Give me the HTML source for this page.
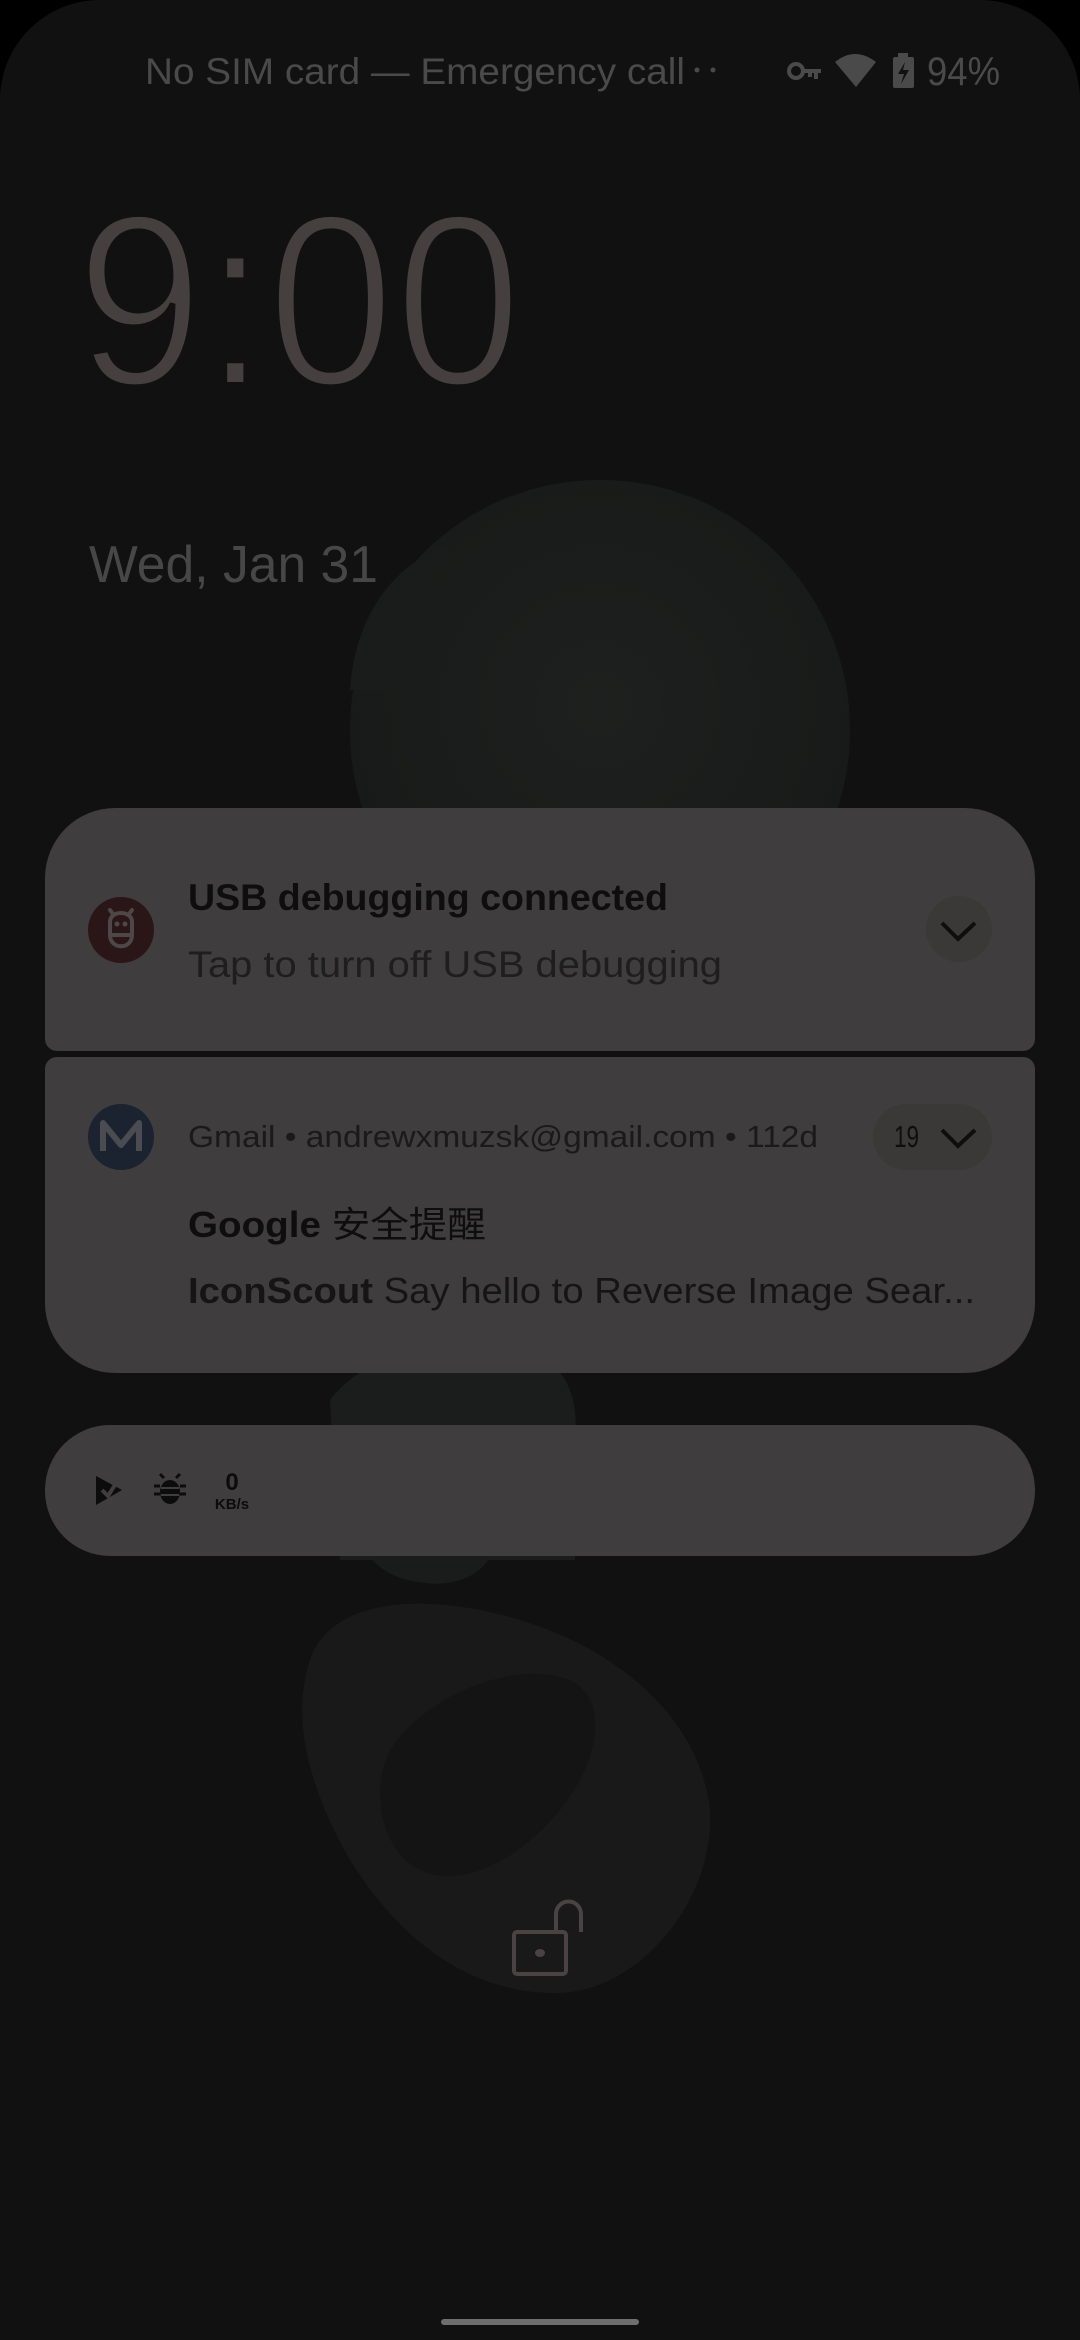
<!DOCTYPE html>
<html><head><meta charset="utf-8"><style>
html,body{margin:0;padding:0;background:#000;}
body{width:1080px;height:2340px;overflow:hidden;}
svg{display:block;}
text{font-family:"Liberation Sans","Noto Sans CJK SC",sans-serif;}
</style></head><body>
<svg width="1080" height="2340" viewBox="0 0 1080 2340" xmlns="http://www.w3.org/2000/svg">
<defs>
<radialGradient id="g1" cx="0.5" cy="0.45" r="0.55"><stop offset="0" stop-color="#1e201f"/><stop offset="1" stop-color="#181a19"/></radialGradient>
</defs>
<rect x="0" y="0" width="1080" height="2340" rx="100" fill="#111111"/>
<rect x="0" y="200" width="1080" height="2140" fill="#111111"/>
<!-- wallpaper blobs -->
<circle cx="600" cy="730" r="250" fill="url(#g1)"/>
<path d="M350 690 C 355 610 400 560 450 545 C 420 590 405 640 400 690 Z" fill="#1a1b1b"/>
<path d="M330 1400 C 360 1360 420 1340 500 1345 C 560 1348 580 1390 575 1440 L 575 1560 L 340 1560 Z" fill="#1b1d1c"/>
<path d="M370 1556 L 490 1556 C 480 1578 450 1586 425 1583 C 400 1580 380 1572 370 1556 Z" fill="#1a1c1b"/>
<path d="M310 1660 C330 1600 420 1590 520 1620 C620 1650 700 1720 710 1810 C715 1900 640 1990 560 1993 C470 1995 400 1940 350 1860 C310 1790 290 1720 310 1660 Z" fill="#191919"/>
<path d="M390 1750 C430 1690 520 1660 570 1680 C610 1700 600 1760 560 1810 C520 1860 460 1890 420 1870 C380 1850 370 1790 390 1750 Z" fill="#141414"/>
<!-- status bar -->
<text x="145" y="84" font-size="37" fill="#4a4a4a" textLength="540" lengthAdjust="spacingAndGlyphs">No SIM card — Emergency call</text>
<circle cx="697" cy="70" r="2.5" fill="#4a4a4a"/><circle cx="713" cy="70" r="2.5" fill="#4a4a4a"/>
<g fill="none" stroke="#4a4a4a" stroke-width="4">
<circle cx="796" cy="71" r="7"/>
<path d="M803 71 H821 M816 71 V79 M810 71 V77"/>
</g>
<path d="M835 62 Q855 46 876 62 L856 87 Z" fill="#4a4a4a"/>
<rect x="898" y="53" width="10" height="5" fill="#4a4a4a"/>
<rect x="893" y="57" width="21" height="31" rx="2" fill="#4a4a4a"/>
<path d="M905 62 L898 74 H904 L901 84 L909 70 H903 Z" fill="#111"/>
<text x="927" y="85" font-size="40" fill="#4a4a4a" textLength="73" lengthAdjust="spacingAndGlyphs">94%</text>
<!-- clock -->
<text x="76" y="385" font-size="245" fill="#463f40" stroke="#111111" stroke-width="6" paint-order="fill" textLength="446" lengthAdjust="spacingAndGlyphs">9:00</text>
<text x="89" y="582" font-size="52" fill="#474747" textLength="289" lengthAdjust="spacingAndGlyphs">Wed, Jan 31</text>
<!-- card 1 -->
<path d="M45 1039 V878 A70 70 0 0 1 115 808 H965 A70 70 0 0 1 1035 878 V1039 A12 12 0 0 1 1023 1051 H57 A12 12 0 0 1 45 1039 Z" fill="#3f3d3e"/>
<circle cx="121" cy="930" r="33" fill="#2a1617"/>
<g fill="none" stroke="#4d4747" stroke-width="4" stroke-linecap="round">
<path d="M110 935 H132 C132 950 110 950 110 935 Z"/>
<path d="M110 935 V922 C110 910 132 910 132 922 V935"/>
<path d="M113 914 L110 910 M129 914 L132 910"/>
</g>
<circle cx="117" cy="924" r="2.5" fill="#4d4747"/><circle cx="125" cy="924" r="2.5" fill="#4d4747"/>
<text x="188" y="910" font-size="37" font-weight="bold" fill="#0e0e0e" textLength="480" lengthAdjust="spacingAndGlyphs">USB debugging connected</text>
<text x="188" y="977" font-size="37" fill="#1e1e1e" textLength="534" lengthAdjust="spacingAndGlyphs">Tap to turn off USB debugging</text>
<circle cx="959" cy="929" r="33" fill="#3b3938"/>
<path d="M942 923 L958 939 L975 923" fill="none" stroke="#0e0e0e" stroke-width="4"/>
<!-- card 2 -->
<path d="M45 1069 A12 12 0 0 1 57 1057 H1023 A12 12 0 0 1 1035 1069 V1303 A70 70 0 0 1 965 1373 H115 A70 70 0 0 1 45 1303 Z" fill="#3f3d3e"/>
<circle cx="121" cy="1137" r="33" fill="#1b2230"/>
<path d="M103 1151 V1123 L121 1145 L139 1123 V1151" fill="none" stroke="#4a4c52" stroke-width="6" stroke-linejoin="round"/>
<text x="188" y="1147" font-size="31" fill="#1a1a1a" textLength="630" lengthAdjust="spacingAndGlyphs">Gmail • andrewxmuzsk@gmail.com • 112d</text>
<rect x="873" y="1104" width="119" height="66" rx="33" fill="#3b3938"/>
<text x="894" y="1147" font-size="31" fill="#0e0e0e" textLength="25" lengthAdjust="spacingAndGlyphs">19</text>
<path d="M942 1130 L958 1146 L975 1130" fill="none" stroke="#0e0e0e" stroke-width="4"/>
<text x="188" y="1237" font-size="36" font-weight="bold" fill="#0e0e0e" textLength="298" lengthAdjust="spacingAndGlyphs">Google <tspan font-weight="normal">安全提醒</tspan></text>
<text x="188" y="1303" font-size="36" fill="#151515" textLength="787" lengthAdjust="spacingAndGlyphs"><tspan font-weight="bold">IconScout</tspan> Say hello to Reverse Image Sear...</text>
<!-- card 3 -->
<rect x="45" y="1425" width="990" height="131" rx="65" fill="#3f3d3e"/>
<path d="M96 1476 L122 1490 L96 1505 Z" fill="#0c0c0c"/>
<path d="M102 1490 L108 1496 L118 1480" fill="none" stroke="#3f3d3e" stroke-width="4"/>
<g fill="#0c0c0c">
<ellipse cx="170" cy="1492" rx="10" ry="12"/>
<path d="M160 1486 H154 M160 1494 H154 M180 1486 H186 M180 1494 H186 M164 1478 L160 1474 M176 1478 L180 1474" stroke="#0c0c0c" stroke-width="3"/>
</g>
<line x1="161" y1="1488" x2="179" y2="1488" stroke="#3f3d3e" stroke-width="2"/>
<line x1="161" y1="1495" x2="179" y2="1495" stroke="#3f3d3e" stroke-width="2"/>
<text x="232" y="1490" font-size="24" font-weight="bold" fill="#0c0c0c" text-anchor="middle">0</text>
<text x="232" y="1509" font-size="15" font-weight="bold" fill="#0c0c0c" text-anchor="middle">KB/s</text>
<!-- lock -->
<rect x="514" y="1932" width="52" height="42" rx="3" fill="none" stroke="#4a4243" stroke-width="4"/>
<ellipse cx="540" cy="1953" rx="5" ry="4" fill="#4a4243"/>
<path d="M556 1932 V1914 A12.5 12.5 0 0 1 581 1914 V1932" fill="none" stroke="#4a4243" stroke-width="4"/>
<!-- home bar -->
<rect x="441" y="2319" width="198" height="6" rx="3" fill="#6e6e6e"/>
</svg>
</body></html>
